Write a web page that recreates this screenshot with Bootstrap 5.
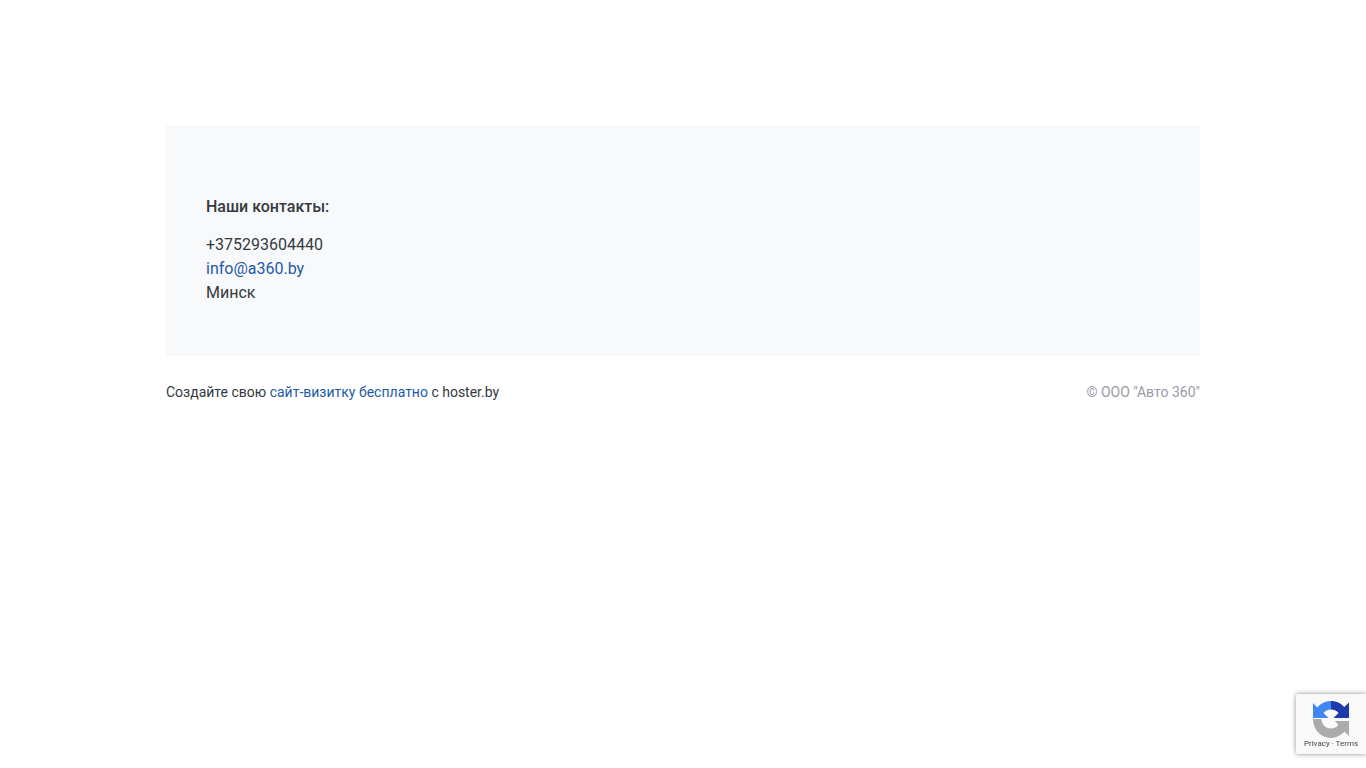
<!DOCTYPE html>
<html lang="ru">
<head>
<meta charset="utf-8">
<title>Контакты</title>
<link href="https://cdn.jsdelivr.net/npm/bootstrap@5.3.0/dist/css/bootstrap.min.css" rel="stylesheet">
<style>
html, body { height: 100%; }
body { font-family: Roboto, "Liberation Sans", sans-serif; font-size: 16px; line-height: 24px; color: #343a40; background: #fff; }
.page-wrap { width: 1034px; margin: 0 auto; padding-top: 125px; }
.contact-panel { background: #f8f9fa; height: 231px; padding: 70px 40px 0; }
.contact-title { font-size: 16px; line-height: 24px; font-weight: 500; margin: 0 0 14px; color: #343a40; }
.contact-lines { margin: 0; color: #343a40; }
.site-link { color: #1e5aa8; text-decoration: none; }
.foot-row { font-size: 14px; line-height: 21px; margin-top: 26px; color: #343a40; }
.foot-copy { color: #9a9aa8; }
.rc-badge { position: fixed; right: 0; bottom: 14px; width: 70px; height: 60px; background: #f9f9f9; border-radius: 2px 0 0 2px; box-shadow: 0 0 5px rgba(0,0,0,.45); text-align: center; overflow: hidden; }
.rc-badge svg { display: block; margin: 6px auto 0 16px; }
.rc-terms { font-family: Roboto, "Liberation Sans", sans-serif; font-size: 8px; line-height: 10px; color: #444; white-space: nowrap; margin-top: 1px; }
</style>
</head>
<body>
<div class="page-wrap">
  <div class="contact-panel">
    <h5 class="contact-title">Наши контакты:</h5>
    <p class="contact-lines">+375293604440<br><a class="site-link" href="#">info@a360.by</a><br>Минск</p>
  </div>
  <div class="d-flex justify-content-between foot-row">
    <div>Создайте свою <a class="site-link" href="#">сайт-визитку бесплатно</a> с hoster.by</div>
    <div class="foot-copy">© ООО "Авто 360"</div>
  </div>
</div>
<div class="rc-badge">
  <svg width="38" height="38" viewBox="0 0 38 38" aria-hidden="true">
    <path fill="#1c3aa9" d="M19 1c5.300 0 10 2.300 13.300 6L37 2.500V18H21.500l5.100-5.100C25 10.800 22.200 9.500 19 9.500z"/>
    <path fill="#4285f4" d="M19 1C13.500 1 8.600 3.500 5.300 7.500L1 3v15h15.500l-5-5C13.200 10.800 16 9.500 19 9.500z"/>
    <path fill="#ababab" d="M1 19h8.500c0 5.300 4.200 9.500 9.500 9.500 3 0 5.600-1.300 7.300-3.500l-3.300-4H37v15l-4.500-4.500C29.200 35 24.400 38 19 38 8.900 38 1 29.500 1 19z"/>
  </svg>
  <div class="rc-terms">Privacy · Terms</div>
</div>
<script src="https://cdn.jsdelivr.net/npm/bootstrap@5.3.0/dist/js/bootstrap.bundle.min.js"></script>
</body>
</html>
